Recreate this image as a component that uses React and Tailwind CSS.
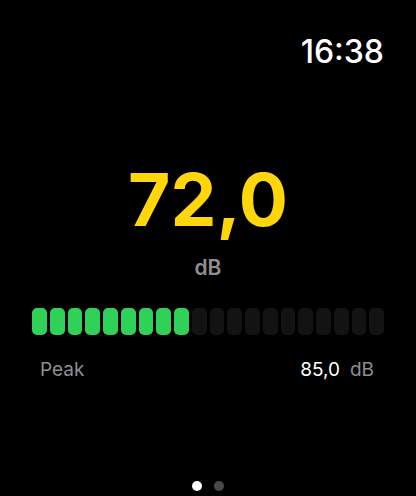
const LEVEL = 9;
const SEGMENTS = 20;

function Meter({ level }) {
  return (
    <div className="flex gap-[3px] h-[27px] px-8">
      {Array.from({ length: SEGMENTS }).map((_, i) => (
        <div
          key={i}
          className={
            i < level
              ? "flex-1 rounded-[5px] bg-[#30d158]"
              : "flex-1 rounded-[5px] bg-[#131313]"
          }
        />
      ))}
    </div>
  );
}

export default function App() {
  return (
    <div
      className="w-[416px] h-[496px] bg-black text-white flex flex-col relative overflow-hidden"
      style={{ fontFamily: "Inter, 'Noto Sans', sans-serif" }}
    >
      <div className="flex justify-end pr-[32px] pt-[33px] h-[80px]">
        <span className="text-[32px] leading-[38px] font-medium">16:38</span>
      </div>

      <div className="flex flex-col items-center mt-[80px]">
        <span className="text-[73px] leading-[80px] font-bold text-[#ffd60a]">
          72,0
        </span>
        <span className="text-[21px] leading-[24px] font-semibold text-[#8e8e93] mt-[16px]">
          dB
        </span>
      </div>

      <div className="mt-[28px]">
        <Meter level={LEVEL} />
      </div>

      <div className="flex justify-between items-baseline pl-[40px] pr-[42px] mt-[24px] text-[19px] leading-[22px]">
        <span className="text-[#8e8e93]">Peak</span>
        <span>
          <span className="text-white">85,0</span>
          <span className="text-[#8e8e93] ml-[10px]">dB</span>
        </span>
      </div>

      <div className="absolute bottom-[5px] left-0 right-0 flex justify-center gap-[12px]">
        <span className="w-[10px] h-[10px] rounded-full bg-white" />
        <span className="w-[10px] h-[10px] rounded-full bg-[#4a4a4a]" />
      </div>
    </div>
  );
}
